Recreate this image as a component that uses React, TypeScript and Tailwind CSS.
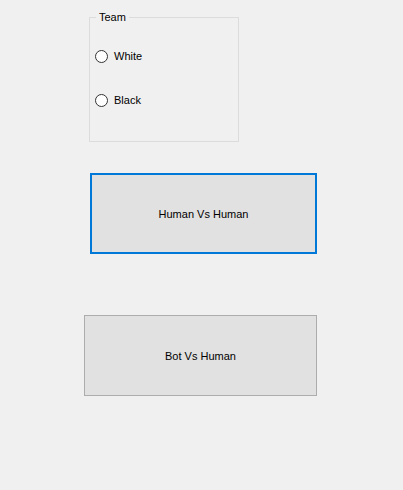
const RadioRow = ({ label }: { label: string }) => (
  <label className="flex items-center h-[16px]">
    <span className="w-[13px] h-[13px] rounded-full border border-[#333333] bg-white" />
    <span className="ml-[6px] text-[11px] leading-[13px] text-black">{label}</span>
  </label>
);

export default function App() {
  return (
    <div
      className="w-full h-[490px] bg-[#f0f0f0] pt-[17px]"
      style={{ fontFamily: '"Liberation Sans", Arial, sans-serif' }}
    >
      <div className="relative ml-[89px] w-[150px] h-[125px] border border-[#dcdcdc]">
        <span className="absolute left-[6px] top-[-7px] px-[3px] bg-[#f0f0f0] text-[11px] leading-[13px] text-black">
          Team
        </span>
        <div className="flex flex-col gap-[28px] pl-[5px] pt-[30px]">
          <RadioRow label="White" />
          <RadioRow label="Black" />
        </div>
      </div>

      <button className="flex items-center justify-center ml-[90px] mt-[31px] w-[227px] h-[81px] pt-[2px] bg-[#e1e1e1] border-2 border-[#0078d7] text-[11px] text-black">
        Human Vs Human
      </button>

      <button className="flex items-center justify-center ml-[84px] mt-[61px] w-[233px] h-[81px] pt-[2px] bg-[#e1e1e1] border border-[#adadad] text-[11px] text-black">
        Bot Vs Human
      </button>
    </div>
  );
}
